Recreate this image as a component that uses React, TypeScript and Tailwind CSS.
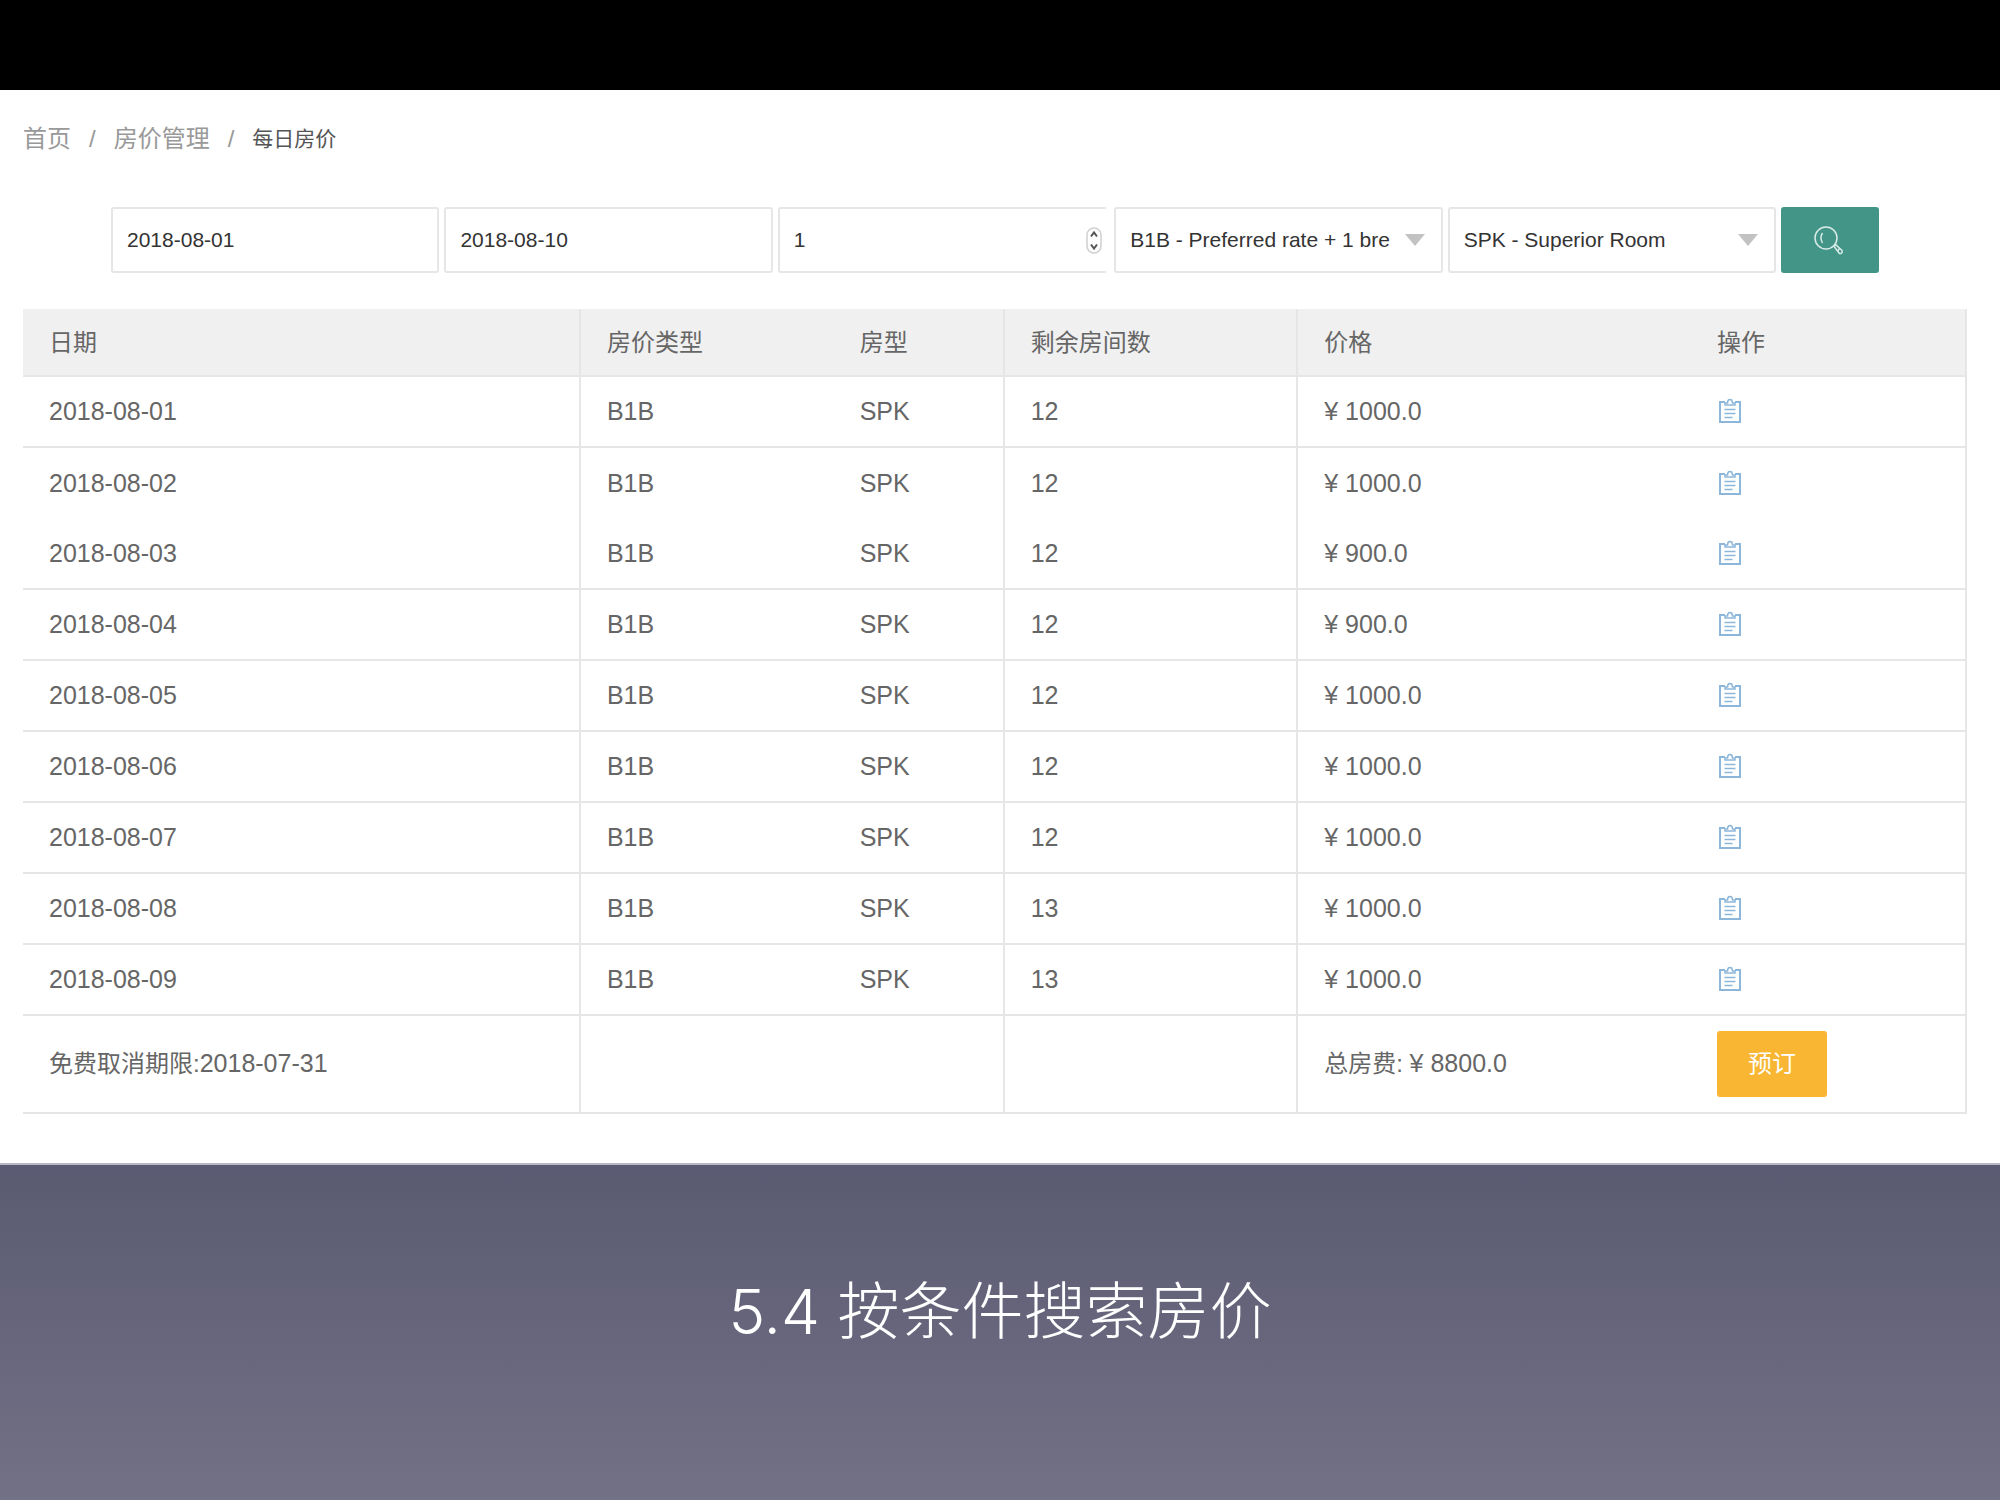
import { useState } from "react";

const RATES = [
  { date: "2018-08-01", rooms: 12, price: "1000.0" },
  { date: "2018-08-02", rooms: 12, price: "1000.0", noLine: true },
  { date: "2018-08-03", rooms: 12, price: "900.0" },
  { date: "2018-08-04", rooms: 12, price: "900.0" },
  { date: "2018-08-05", rooms: 12, price: "1000.0" },
  { date: "2018-08-06", rooms: 12, price: "1000.0" },
  { date: "2018-08-07", rooms: 12, price: "1000.0" },
  { date: "2018-08-08", rooms: 13, price: "1000.0" },
  { date: "2018-08-09", rooms: 13, price: "1000.0" },
];

const FIELD =
  "h-[66px] w-full rounded-[3px] border-2 border-[#e6e6e6] bg-white pl-[14px] text-[21px] text-[#333] outline-none";
const LINE = "border-r-2 border-[#e6e6e6]";

function ClipboardIcon() {
  return (
    <svg width="26" height="28" viewBox="0 0 26 28" fill="none" stroke="#8db7da" strokeWidth="2">
      <path d="M8 4H3v20h20V4h-5" />
      <path d="M8 7V5h2.500c0-2 1-3.500 2.500-3.500s2.500 1.500 2.500 3.500H18v2z" strokeWidth="1.500" />
      <path d="M7.500 11.500h11M7.500 15.500h11M7.500 19.500h8" strokeWidth="1.500" />
    </svg>
  );
}

function SearchIcon() {
  return (
    <svg width="32" height="32" viewBox="0 0 32 32" fill="none" stroke="#d9ebe8" strokeWidth="1.500">
      <circle cx="12" cy="14" r="11" />
      <path d="M8.500 9c-2 3-2 6.500 0 10" />
      <path d="M20 22.500l2-1.500 6 5.500c.8 2-.8 3.500-2.500 3z" />
      <path d="M25.500 24.500l-2 2.500" />
    </svg>
  );
}

function SelectBox({ label, options }: { label: string; options: string[] }) {
  return (
    <div className="relative flex-1">
      <select aria-label={label} className={`${FIELD} appearance-none pr-12`}>
        {options.map((o) => (
          <option key={o}>{o}</option>
        ))}
      </select>
      <svg className="pointer-events-none absolute top-[27px] right-[18px]" width="20" height="12" viewBox="0 0 20 12">
        <path d="M0 0h20L10 12z" fill="#c2c2c2" />
      </svg>
    </div>
  );
}

function SearchBar() {
  const [start, setStart] = useState("2018-08-01");
  const [end, setEnd] = useState("2018-08-10");
  const [count, setCount] = useState("1");

  return (
    <form className="mr-[121px] ml-[111px] flex gap-[5px]" onSubmit={(e) => e.preventDefault()}>
      <div className="flex-1">
        <input aria-label="入住日期" className={FIELD} value={start} onChange={(e) => setStart(e.target.value)} />
      </div>
      <div className="flex-1">
        <input aria-label="离店日期" className={FIELD} value={end} onChange={(e) => setEnd(e.target.value)} />
      </div>
      <div className="relative mr-[3px] flex-1">
        <input
          type="number"
          aria-label="房间数"
          className={`${FIELD} rounded-r-none border-r-0 [appearance:textfield]`}
          value={count}
          onChange={(e) => setCount(e.target.value)}
        />
        <svg
          className="pointer-events-none absolute top-5 right-1"
          width="16"
          height="27"
          viewBox="0 0 16 27"
          fill="none"
        >
          <rect x="1" y="1" width="14" height="25" rx="7" stroke="#cfcfcf" strokeWidth="1.500" />
          <path d="M5 9.500l3-4 3 4M5 17.500l3 4 3-4" stroke="#555" strokeWidth="2" />
        </svg>
      </div>
      <SelectBox label="房价类型" options={["B1B - Preferred rate + 1 bre"]} />
      <SelectBox label="房型" options={["SPK - Superior Room"]} />
      <button
        type="submit"
        aria-label="搜索"
        className="flex h-[66px] w-[98px] items-center justify-center rounded-[3px] bg-[#439687]"
      >
        <SearchIcon />
      </button>
    </form>
  );
}

function RateTable() {
  return (
    <table className="w-full table-fixed border-separate border-spacing-0 text-left text-[#666]">
      <colgroup>
        <col className="w-[28.7%]" />
        <col className="w-[13%]" />
        <col className="w-[8.8%]" />
        <col className="w-[15.1%]" />
        <col className="w-[20.2%]" />
        <col className="w-[14.2%]" />
      </colgroup>
      <thead>
        <tr className="h-[68px] bg-[#f0f0f0] text-2xl [&>th]:border-b-2 [&>th]:border-[#e6e6e6] [&>th]:px-[26px] [&>th]:pt-[2px] [&>th]:font-normal">
          <th className={LINE}>日期</th>
          <th>房价类型</th>
          <th className={LINE}>房型</th>
          <th className={LINE}>剩余房间数</th>
          <th>价格</th>
          <th className={LINE}>操作</th>
        </tr>
      </thead>
      <tbody>
        {RATES.map((r) => (
          <tr
            key={r.date}
            className={`h-[71px] text-[25px] [&>td]:px-[26px] ${
              r.noLine ? "" : "[&>td]:border-b-2 [&>td]:border-b-[#e6e6e6]"
            }`}
          >
            <td className={LINE}>{r.date}</td>
            <td>B1B</td>
            <td className={LINE}>SPK</td>
            <td className={LINE}>{r.rooms}</td>
            <td>¥ {r.price}</td>
            <td className={LINE}>
              <button type="button" aria-label={`编辑 ${r.date}`} className="block">
                <ClipboardIcon />
              </button>
            </td>
          </tr>
        ))}
      </tbody>
      <tfoot>
        <tr className="h-[98px] text-2xl [&>td]:border-b-2 [&>td]:border-[#e6e6e6] [&>td]:px-[26px]">
          <td className={LINE}>
            免费取消期限:<span className="text-[25px]">2018-07-31</span>
          </td>
          <td></td>
          <td className={LINE}></td>
          <td className={LINE}></td>
          <td>
            总房费: <span className="text-[25px]">¥ 8800.0</span>
          </td>
          <td className={LINE}>
            <button type="button" className="block h-[66px] w-[110px] rounded-[3px] bg-[#f8b633] text-white">
              预订
            </button>
          </td>
        </tr>
      </tfoot>
    </table>
  );
}

export default function App() {
  return (
    <div className="flex min-h-screen flex-col bg-black font-['Liberation_Sans','Noto_Sans_CJK_SC',sans-serif]">
      <div className="h-[90px]" />
      <main className="border-b-2 border-[#b9b9c4] bg-white pb-[49px]">
        <nav
          aria-label="breadcrumb"
          className="flex h-[117px] items-start gap-[18px] px-[23px] pt-[31px] text-2xl leading-9 text-[#999]"
        >
          <a href="#">首页</a>
          <span>/</span>
          <a href="#">房价管理</a>
          <span>/</span>
          <span className="text-[21px] text-[#555]">每日房价</span>
        </nav>
        <SearchBar />
        <div className="mt-9 pr-[33px] pl-[23px]">
          <RateTable />
        </div>
      </main>
      <section className="flex-1 bg-gradient-to-b from-[#5a5a72] to-[#737185] pt-[102px] text-center">
        <h1 className="font-['Inter','Noto_Sans_CJK_SC',sans-serif] text-[62px] leading-[90px] font-light text-white">
          5.4 按条件搜索房价
        </h1>
      </section>
    </div>
  );
}
